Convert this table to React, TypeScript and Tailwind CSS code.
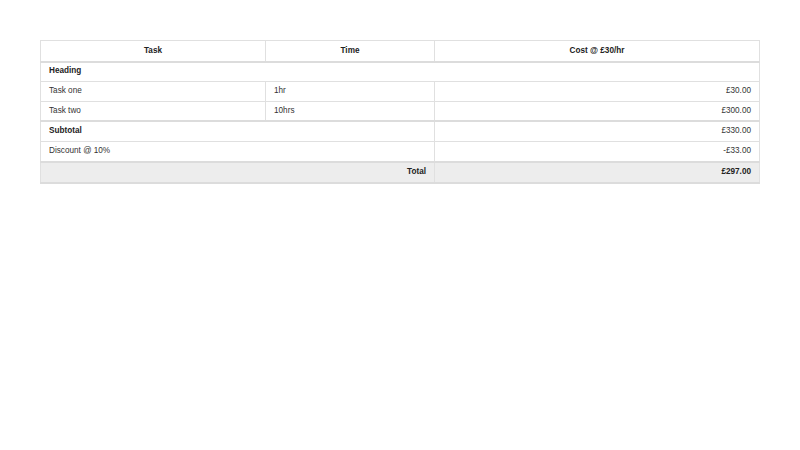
import React from 'react'

const cell = 'border border-[#e0e0e0] px-2 h-5 align-middle'

export default function App() {
  return (
    <div className="min-h-screen bg-white pt-10 px-10 text-[#333] text-[8.2px] font-['Liberation_Sans',Arial,sans-serif]">
      <table className="w-[720px] border-collapse border border-[#e0e0e0] table-fixed">
        <colgroup>
          <col className="w-[225px]" />
          <col className="w-[169px]" />
          <col />
        </colgroup>
        <thead>
          <tr className="border-b-2 border-[#dcdcdc]">
            <th className={`${cell} h-[21px] font-bold text-center text-[#222]`}>Task</th>
            <th className={`${cell} h-[21px] font-bold text-center text-[#222]`}>Time</th>
            <th className={`${cell} h-[21px] font-bold text-center text-[#222]`}>Cost @ £30/hr</th>
          </tr>
        </thead>
        <tbody>
          <tr>
            <td colSpan={3} className={`${cell} h-[19.5px] font-bold text-[#222]`}>Heading</td>
          </tr>
          <tr>
            <td className={cell}>Task one</td>
            <td className={cell}>1hr</td>
            <td className={`${cell} text-right`}>£30.00</td>
          </tr>
          <tr className="border-b-2 border-[#dcdcdc]">
            <td className={cell}>Task two</td>
            <td className={cell}>10hrs</td>
            <td className={`${cell} text-right`}>£300.00</td>
          </tr>
          <tr>
            <td colSpan={2} className={`${cell} h-[20.5px] font-bold text-[#222]`}>Subtotal</td>
            <td className={`${cell} h-[20.5px] text-right`}>£330.00</td>
          </tr>
          <tr>
            <td colSpan={2} className={cell}>Discount @ 10%</td>
            <td className={`${cell} text-right`}>-£33.00</td>
          </tr>
        </tbody>
        <tfoot>
          <tr className="bg-[#ededed] border-t-2 border-b-2 border-[#dcdcdc]">
            <td colSpan={2} className={`${cell} h-[21px] font-bold text-right text-[#222]`}>Total</td>
            <td className={`${cell} h-[21px] font-bold text-right text-[#222]`}>£297.00</td>
          </tr>
        </tfoot>
      </table>
    </div>
  )
}
